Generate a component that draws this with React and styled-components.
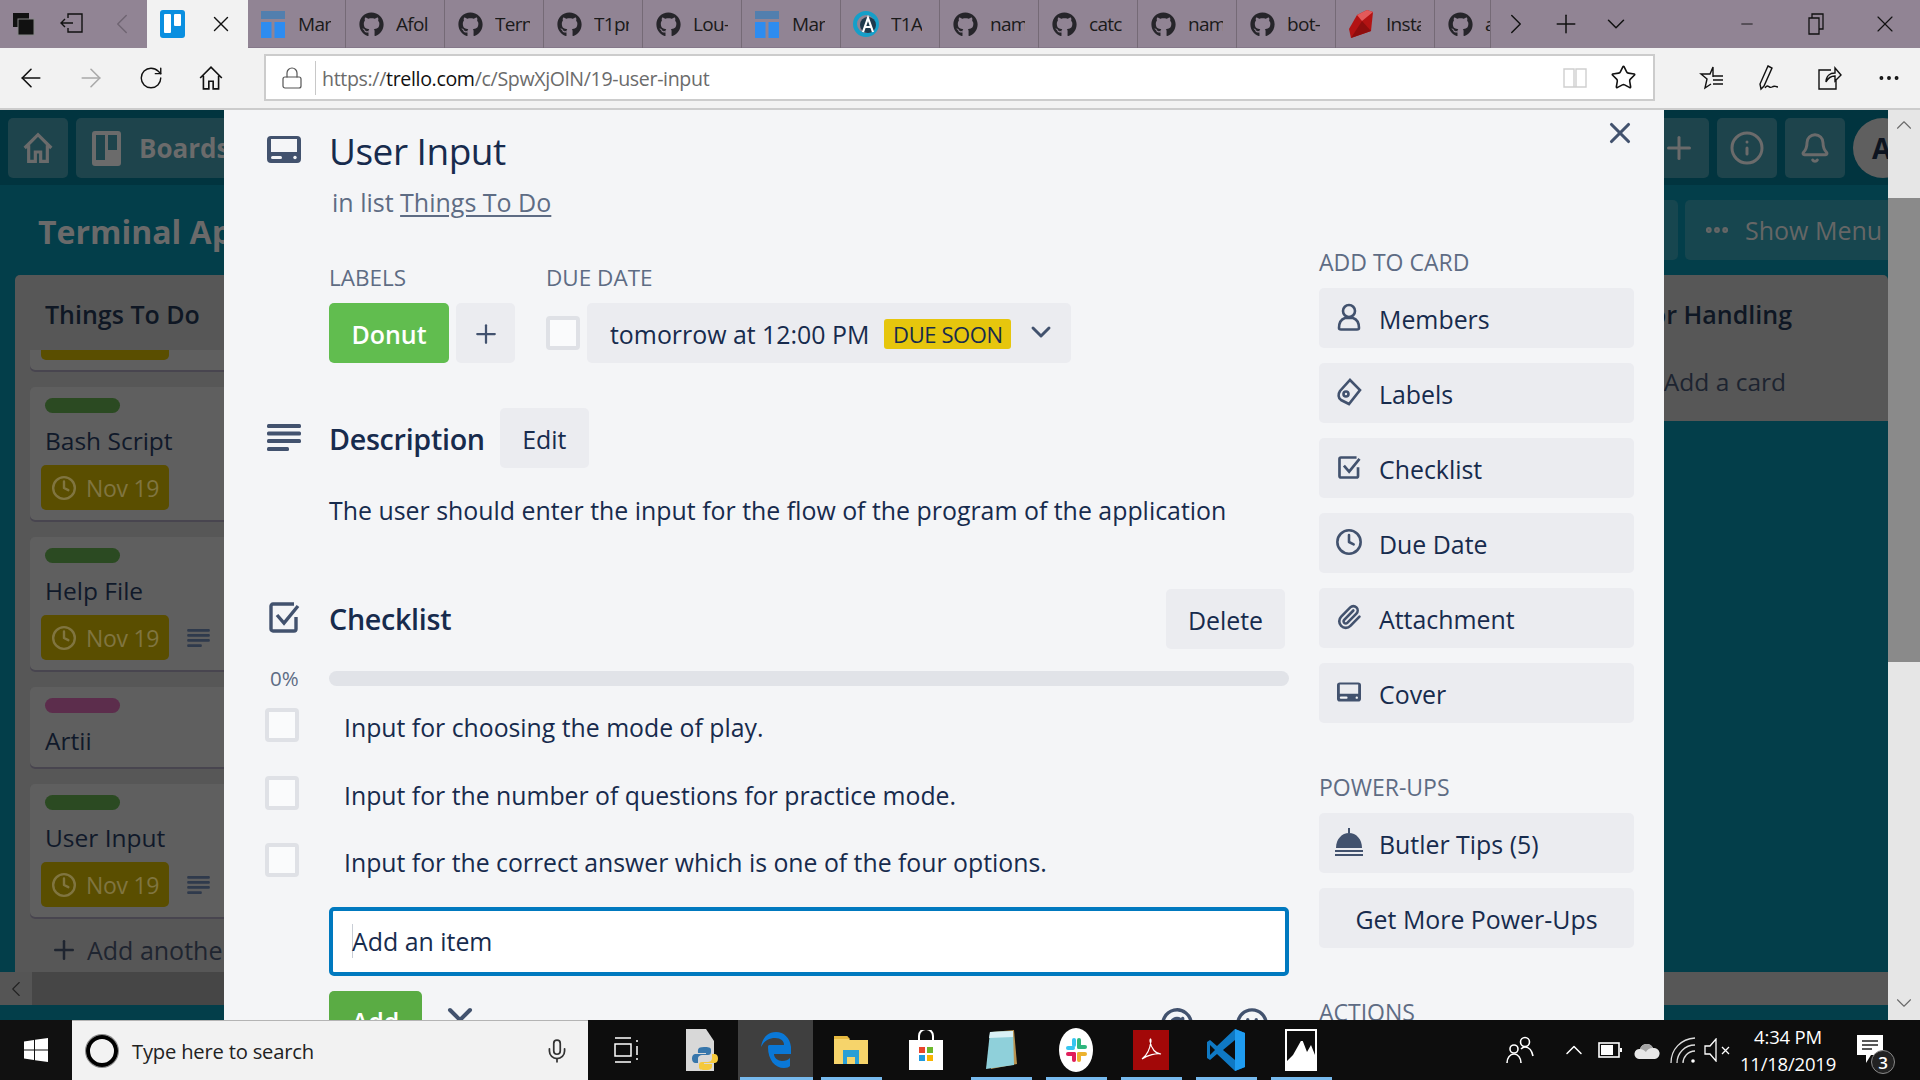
import styled, { createGlobalStyle } from 'styled-components';
import { FaGithub } from 'react-icons/fa';
import { ArrowLeft, ArrowRight, RotateCw, Lock, Star, Plus, X, ChevronDown, ChevronLeft, ChevronRight, ChevronUp, Minus, Info, Bell, Clock, Mic, Paperclip, AtSign, Smile, MoreHorizontal } from 'lucide-react';

const FONT = `"Open Sans", "Noto Sans", "Liberation Sans", sans-serif`;

const GlobalStyle = createGlobalStyle`
  html, body { margin: 0; padding: 0; width: 1920px; height: 1080px; overflow: hidden; }
  body { font-family: ${FONT}; color: #172b4d; }
  * { box-sizing: border-box; }
`;

const Screen = styled.div`
  width: 1920px;
  height: 1080px;
  display: flex;
  flex-direction: column;
  overflow: hidden;
`;

/* browser chrome */
const TabStrip = styled.div`
  height: 48px;
  flex: none;
  display: flex;
  align-items: stretch;
  background: #918494;
`;
const StripTool = styled.div`
  width: ${p => p.$w}px;
  flex: none;
  display: flex;
  align-items: center;
  justify-content: center;
  color: ${p => p.$dim ? '#6f6472' : '#111'};
  margin-left: ${p => p.$push ? 'auto' : '0'};
  height: 48px;
`;
const ActiveTab = styled.div`
  width: 101px;
  flex: none;
  display: flex;
  align-items: center;
  justify-content: space-between;
  padding: 0 14px 0 13px;
  background: #f2f2f2;
`;
const Tab = styled.div`
  width: ${p => p.$w || 99}px;
  flex: none;
  display: flex;
  align-items: center;
  gap: 12px;
  padding-left: 12px;
  border-right: 1px solid #756a76;
  overflow: hidden;
  box-shadow: inset 0 -1px 0 #85788a;
`;
const TabIcon = styled.span`
  width: 26px;
  height: 26px;
  flex: none;
  display: flex;
  align-items: center;
  justify-content: center;
  color: #26252a;
`;
const TabText = styled.span`
  max-width: 35px;
  font-size: 19px;
  letter-spacing: -0.7px;
  color: #1a1a1a;
  white-space: nowrap;
  overflow: hidden;
`;
const WindowTools = styled.div`
  flex: 1;
  display: flex;
  align-items: center;
`;

const Toolbar = styled.div`
  height: 62px;
  flex: none;
  display: flex;
  padding-top: 6px;
  background: #f2f2f2;
  border-bottom: 2px solid #cccccc;
`;
const NavTools = styled.div`
  width: 264px;
  flex: none;
  height: 47px;
  display: flex;
  align-items: center;
  padding-left: 1px;
`;
const NavButton = styled.div`
  width: 60px;
  height: 47px;
  display: flex;
  align-items: center;
  justify-content: center;
  color: ${p => p.$dim ? '#a9a9a9' : '#111'};
`;
const AddressBar = styled.div`
  width: 1391px;
  height: 47px;
  flex: none;
  display: flex;
  align-items: center;
  background: #fff;
  border: 2px solid #cccccc;
  padding: 0 6px 0 14px;
`;
const LockCell = styled.div`
  width: 36px;
  height: 34px;
  flex: none;
  display: flex;
  align-items: center;
  border-right: 1px solid #c8c8c8;
  color: #555;
  margin-right: 6px;
`;
const Url = styled.div`
  flex: 1;
  padding-top: 2px;
  font-size: 19.6px;
  letter-spacing: -0.35px;
  color: #6b6b6b;
  b { font-weight: 400; color: #111; }
`;
const BarIcon = styled.div`
  width: 48px;
  display: flex;
  justify-content: center;
  color: ${p => p.$dim ? '#cfcfcf' : '#111'};
`;
const EndTools = styled.div`
  flex: 1;
  height: 47px;
  display: flex;
  align-items: center;
  padding-left: 27px;
`;
const EndTool = styled.div`
  width: 59px;
  display: flex;
  justify-content: center;
  color: #111;
`;

/* board behind the dialog */
const Page = styled.div`
  flex: 1;
  min-height: 0;
  display: flex;
  position: relative;
  overflow: hidden;
`;
const Board = styled.div`
  width: 1888px;
  display: flex;
  flex-direction: column;
  background: #033e4a;
  position: relative;
`;
const BoardHeader = styled.div`
  height: 75px;
  flex: none;
  display: flex;
  gap: 8px;
  padding: 8px 0 7px 8px;
  background: #01343f;
  overflow: hidden;
`;
const HeaderButton = styled.div`
  width: ${p => p.$w || 60}px;
  flex: none;
  height: 60px;
  display: flex;
  align-items: center;
  justify-content: center;
  background: #1e444c;
  border-radius: 5px;
  color: #6b6b6b;
  margin-left: ${p => p.$push ? 'auto' : '0'};
`;
const BoardsButton = styled(HeaderButton)`
  justify-content: flex-start;
  gap: 18px;
  padding-left: 16px;
  font-size: 26px;
  font-weight: 700;
`;
const Avatar = styled.div`
  width: 60px;
  height: 60px;
  flex: none;
  border-radius: 50%;
  margin-right: -25px;
  background: #5f5f5f;
  color: #0d1420;
  font-size: 28px;
  font-weight: 700;
  padding-left: 19px;
  line-height: 60px;
`;
const BoardBar = styled.div`
  height: 90px;
  flex: none;
  display: flex;
  align-items: flex-start;
  gap: 7px;
  padding: 15px 0 0 38px;
`;
const BoardTitle = styled.div`
  font-size: 32px;
  line-height: 64px;
  font-weight: 700;
  color: #6a6a6a;
  white-space: nowrap;
`;
const FilterButton = styled.div`
  margin-left: auto;
  width: 60px;
  height: 60px;
  background: #17464f;
  border-radius: 5px;
`;
const MenuButton = styled.div`
  width: 203px;
  height: 60px;
  display: flex;
  align-items: center;
  gap: 14px;
  padding-left: 18px;
  background: #17464f;
  border-radius: 5px 0 0 5px;
  color: #666;
  font-size: 25px;
  white-space: nowrap;
`;
const Lists = styled.div`
  flex: 1;
  min-height: 0;
  display: flex;
  justify-content: space-between;
  align-items: flex-start;
  padding-left: 15px;
  overflow: hidden;
`;
const List = styled.div`
  width: ${p => p.$w}px;
  height: ${p => p.$h ? `${p.$h}px` : '100%'};
  flex: none;
  background: #575757;
  border-radius: 5px 5px 0 0;
  padding: 0 0 0 15px;
  overflow: hidden;
`;
const ListTitle = styled.div`
  height: 75px;
  padding: 19px ${p => p.$right ? '96px' : '0'} 0 ${p => p.$right ? '0' : '15px'};
  font-size: 25px;
  line-height: 40px;
  font-weight: 600;
  color: #0f1724;
  white-space: nowrap;
  text-align: ${p => p.$right ? 'right' : 'left'};
`;
const CardStack = styled.div`
  display: flex;
  flex-direction: column;
  gap: 15px;
`;
const TinyCard = styled.div`
  height: ${p => p.$h}px;
  padding: ${p => p.$clip ? '0' : '11px'} 0 0 11px;
  background: #5f5f5f;
  border-radius: ${p => p.$clip ? '0 0 5px 5px' : '5px'};
  box-shadow: inset 0 -2px 0 #48454f;
`;
const CardLabel = styled.div`
  width: 75px;
  height: 15px;
  margin-left: 4px;
  border-radius: 8px;
  background: ${p => p.$c};
`;
const CardText = styled.div`
  margin: 10px 0 0 4px;
  font-size: 24.5px;
  line-height: 36px;
  color: #10192a;
`;
const CardFoot = styled.div`
  display: flex;
  align-items: center;
  margin-top: 6px;
  gap: 18px;
`;
const DueBadge = styled.div`
  width: 128px;
  height: 45px;
  display: flex;
  align-items: center;
  gap: 9px;
  padding-left: 10px;
  background: #5a4e00;
  border-radius: 5px;
  color: #807540;
  font-size: 23px;
  letter-spacing: -0.3px;
  flex: none;
  white-space: nowrap;
`;
const ClipBadge = styled.div`
  width: 128px;
  height: 10px;
  background: #5a4e00;
  border-radius: 0 0 5px 5px;
`;
const AddAnother = styled.div`
  display: flex;
  align-items: center;
  gap: 8px;
  margin: 13px 0 0 19px;
  font-size: 25px;
  color: #1f2530;
  white-space: nowrap;
  height: 36px;
`;
const AddCardText = styled.div`
  font-size: 24.5px;
  line-height: 36px;
  color: #1d2430;
  text-align: right;
  padding-right: 102px;
  margin-top: 14px;
  white-space: nowrap;
`;
const HScroll = styled.div`
  height: 33px;
  flex: none;
  margin-bottom: 15px;
  background: linear-gradient(90deg, #464646 0 50%, #575757 50%);
  display: flex;
`;
const HScrollArrow = styled.div`
  width: 32px;
  background: #555;
  display: flex;
  align-items: center;
  justify-content: center;
  color: #222;
`;
const VScroll = styled.div`
  width: 32px;
  flex: none;
  display: flex;
  flex-direction: column;
  background: #e6e6e6;
`;
const VArrow = styled.div`
  height: ${p => p.$h}px;
  flex: ${p => p.$grow ? 1 : 'none'};
  display: flex;
  justify-content: center;
  align-items: ${p => p.$grow ? 'flex-end' : 'flex-start'};
  padding: ${p => p.$grow ? '0 0 4px' : '2px 0 0'};
  color: #6a6a6a;
`;
const VThumb = styled.div`
  height: 464px;
  flex: none;
  background: #8a8a8a;
`;

/* trello card dialog */
const Dialog = styled.div`
  position: absolute;
  top: 0;
  bottom: 0;
  left: 224px;
  width: 1440px;
  display: flex;
  gap: 30px;
  background: #f4f5f7;
  overflow: hidden;
`;
const Main = styled.div`
  width: 1065px;
  flex: none;
  padding: 17px 0 0 105px;
  position: relative;
`;
const Gutter = styled.div`
  position: absolute;
  left: ${p => p.$x}px;
  top: ${p => p.$y}px;
  color: #42526e;
  display: flex;
`;
const Section = styled.div`
  position: relative;
  margin-top: ${p => p.$mt || 0}px;
`;
const CardTitle = styled.h2`
  margin: 0;
  font-size: 37px;
  line-height: 48px;
  font-weight: 500;
  letter-spacing: -0.5px;
  color: #172b4d;
`;
const InList = styled.div`
  margin: 9px 0 0 3px;
  font-size: 25px;
  line-height: 36px;
  color: #5e6c84;
  u { text-underline-offset: 3px; text-decoration-thickness: 2px; }
`;
const MetaRow = styled.div`
  display: flex;
  margin-top: 43px;
  gap: 31px;
`;
const MetaBlock = styled.div`
  display: flex;
  flex-direction: column;
`;
const Caption = styled.div`
  font-size: 22.5px;
  line-height: 30px;
  color: #5e6c84;
  white-space: nowrap;
`;
const MetaItems = styled.div`
  display: flex;
  align-items: center;
  margin-top: 10px;
  gap: 7px;
`;
const GreenLabel = styled.div`
  width: 120px;
  height: 60px;
  display: flex;
  align-items: center;
  justify-content: center;
  padding-top: 1px;
  background: #61bd4f;
  border-radius: 5px;
  color: #fff;
  font-size: 25px;
  font-weight: 600;
`;
const Btn = styled.div`
  width: ${p => p.$w ? `${p.$w}px` : 'auto'};
  height: 60px;
  display: flex;
  align-items: center;
  justify-content: center;
  flex: none;
  background: #ebecf0;
  border-radius: 5px;
  color: #172b4d;
  font-size: 24.9px;
  padding-top: 2px;
  margin-left: ${p => p.$push ? 'auto' : '0'};
  margin-right: ${p => p.$push ? '4px' : '0'};
`;
const DateBtn = styled(Btn)`
  width: 484px;
  justify-content: flex-start;
  padding-left: 23px;
  white-space: nowrap;
`;
const SoonBadge = styled.span`
  width: 127px;
  height: 30px;
  margin-left: 15px;
  display: flex;
  align-items: center;
  justify-content: center;
  background: #e6c60d;
  border-radius: 3px;
  font-size: 22px;
  letter-spacing: -0.4px;
`;
const DateChevron = styled.span`
  margin: -4px 0 0 14px;
  display: flex;
  color: #42526e;
`;
const Check = styled.div`
  width: 34px;
  height: 34px;
  flex: none;
  background: #fafbfc;
  border: 4px solid #dfe1e6;
  border-radius: 4px;
`;
const HeadRow = styled.div`
  height: 60px;
  display: flex;
  align-items: center;
  gap: 15px;
`;
const H3 = styled.h3`
  margin: ${p => p.$up ? '-2px' : '0'} 0 0;
  font-size: 28.7px;
  font-weight: 600;
  letter-spacing: -0.3px;
  color: #172b4d;
`;
const Para = styled.p`
  margin: 24px 0 0;
  font-size: 24.9px;
  line-height: 36px;
  color: #172b4d;
  white-space: nowrap;
`;
const ProgressRow = styled.div`
  height: 30px;
  margin-top: 14px;
  display: flex;
  align-items: center;
  position: relative;
`;
const Percent = styled.span`
  position: absolute;
  left: -59px;
  font-size: 20.5px;
  color: #5e6c84;
`;
const Progress = styled.div`
  width: 960px;
  height: 15px;
  border-radius: 8px;
  background: #e1e3e8;
`;
const Items = styled.div`
  margin-top: 7px;
  position: relative;
`;
const Item = styled.div`
  height: 67.5px;
  padding: 9px 0 0 15px;
  font-size: 24.8px;
  line-height: 36px;
  color: #172b4d;
  white-space: nowrap;
  position: relative;
`;
const ItemCheck = styled(Check)`
  position: absolute;
  left: -64px;
  top: 8px;
`;
const ItemInput = styled.div`
  margin-top: 4.5px;
  height: 69px;
  display: flex;
  align-items: center;
  padding: 0 0 2px 19px;
  background: #fff;
  border: 4px solid #0079bf;
  border-radius: 5px;
  font-size: 24.9px;
  color: #172b4d;
`;
const Caret = styled.span`
  width: 1px;
  height: 34px;
  background: #c9ced6;
  margin-right: -1px;
`;
const AddRow = styled.div`
  margin-top: 15px;
  display: flex;
  align-items: flex-start;
  color: #42526e;
`;
const AddBtn = styled.div`
  width: 93px;
  height: 60px;
  display: flex;
  align-items: center;
  justify-content: center;
  background: #5aac44;
  border-radius: 5px;
  color: #fff;
  font-size: 25px;
  font-weight: 600;
`;
const AddClose = styled.div`
  margin: 9px 0 0 18px;
  display: flex;
`;
const AddTools = styled.div`
  margin: 16px 0 0 auto;
  padding-right: 20px;
  display: flex;
  gap: 41px;
`;
const Sidebar = styled.div`
  width: 345px;
  flex: none;
  padding: 137px 30px 0 0;
  position: relative;
`;
const SideGroup = styled.div`
  display: flex;
  flex-direction: column;
  gap: 15px;
  margin-top: 11px;
`;
const SideCaption = styled(Caption)`
  font-size: 23px;
  margin-top: ${p => p.$mt || 0}px;
`;
const SideBtn = styled.div`
  height: 60px;
  display: flex;
  align-items: center;
  justify-content: ${p => p.$center ? 'center' : 'flex-start'};
  background: #ebecf0;
  border-radius: 5px;
  font-size: 24.9px;
  color: #172b4d;
  padding-top: 2px;
`;
const SideIcon = styled.span`
  width: 60px;
  margin-top: -4px;
  flex: none;
  display: flex;
  justify-content: center;
  color: #42526e;
`;
const CloseBtn = styled.div`
  position: absolute;
  top: 6px;
  right: 27px;
  color: #42526e;
  display: flex;
`;

/* windows taskbar */
const Taskbar = styled.div`
  height: 60px;
  flex: none;
  display: flex;
  background: #0d0d0d;
  color: #fff;
`;
const StartCell = styled.div`
  width: 72px;
  flex: none;
  display: flex;
  align-items: center;
  justify-content: center;
  background: #111;
`;
const SearchBox = styled.div`
  width: 516px;
  flex: none;
  display: flex;
  align-items: center;
  padding: 0 18px 0 14px;
  background: #f2f2f2;
  border-top: 1px solid #b4b4b4;
  color: #222;
  font-size: 20.2px;
  letter-spacing: -0.2px;
`;
const Cortana = styled.span`
  width: 32px;
  height: 32px;
  flex: none;
  border: 4px solid #000;
  border-radius: 50%;
  margin-right: 14px;
  box-shadow: 0 0 0 1px #888;
`;
const MicCell = styled.span`
  margin-left: auto;
  color: #333;
  display: flex;
`;
const Slot = styled.div`
  width: 75px;
  flex: none;
  display: flex;
  align-items: center;
  justify-content: center;
  position: relative;
  background: ${p => p.$active ? '#3f3f3f' : 'transparent'};
  &::after {
    content: '';
    display: ${p => p.$open ? 'block' : 'none'};
    position: absolute;
    bottom: 0;
    left: ${p => p.$active ? '2px' : '8px'};
    right: ${p => p.$active ? '0' : '6px'};
    height: 3px;
    background: #76b9ed;
  }
`;
const Tray = styled.div`
  flex: 1;
  display: flex;
  justify-content: flex-end;
  padding-right: 21px;
`;
const TrayCell = styled.div`
  width: ${p => p.$w}px;
  margin-right: ${p => p.$mr || 0}px;
  flex: none;
  display: flex;
  align-items: center;
  justify-content: center;
  position: relative;
`;
const Clock2 = styled.div`
  text-align: center;
  font-size: 18.5px;
  line-height: 27px;
  letter-spacing: -0.2px;
  white-space: nowrap;
`;
const NotifyCount = styled.span`
  position: absolute;
  right: 4px;
  top: 30px;
  width: 24px;
  height: 24px;
  border-radius: 50%;
  background: #222;
  border: 1px solid #888;
  color: #fff;
  font-size: 17px;
  font-weight: 600;
  display: flex;
  align-items: center;
  justify-content: center;
`;

/* drawn icons */
const TrelloMark = () => (
  <svg width="25" height="28" viewBox="0 0 25 28">
    <rect width="25" height="28" rx="3" fill="#0a8fe0" />
    <rect x="4" y="4" width="7" height="19" rx="1" fill="#fff" />
    <rect x="14" y="4" width="7" height="12" rx="1" fill="#fff" />
  </svg>
);
const BoardMark = () => (
  <svg width="24" height="27" viewBox="0 0 24 27">
    <rect width="24" height="8" fill="#527fae" />
    <rect y="11" width="10.5" height="16" fill="#2d8cf0" />
    <rect x="13.5" y="11" width="10.5" height="16" fill="#2d8cf0" />
  </svg>
);
const CircleA = () => (
  <svg width="26" height="26" viewBox="0 0 26 26">
    <circle cx="13" cy="13" r="11" fill="none" stroke="#159fc9" strokeWidth="4" />
    <circle cx="15" cy="14" r="8" fill="#1f3a4d" />
    <path d="M10 21 15 7l5 14M12 16h6" fill="none" stroke="#fff" strokeWidth="2.200" />
  </svg>
);
const RubyMark = () => (
  <svg width="26" height="30" viewBox="0 0 26 30">
    <path d="M19 1 25 3 23 22 3 29 1 20 9 6Z" fill="#b31313" />
    <path d="M19 1 25 3 14 12 9 6Z" fill="#e25a5a" />
    <path d="M3 29 14 12 23 22Z" fill="#8e0d0d" />
  </svg>
);
const SetAside = () => (
  <svg width="22" height="26" viewBox="0 0 22 26">
    <rect x="0" y="2" width="16" height="14" fill="#111" />
    <rect x="5" y="8" width="16" height="16" fill="#111" stroke="#888" />
  </svg>
);
const TabsAside = () => (
  <svg width="24" height="24" viewBox="0 0 24 24" fill="none" stroke="#111" strokeWidth="1.4">
    <path d="M8 6V2h14v18H8v-4M1 11h12M5 7l-4 4 4 4" />
  </svg>
);
const HomeIcon = ({ size = 24, width = 1.5 }) => (
  <svg width={size} height={size} viewBox="0 0 24 24" fill="none" stroke="currentColor" strokeWidth={width}>
    <path d="M2 12 12 2l10 10M5 10v12h5v-7h4v7h5V10" />
  </svg>
);
const ReadIcon = () => (
  <svg width="24" height="24" viewBox="0 0 24 24" fill="none" stroke="currentColor" strokeWidth="1.4">
    <path d="M1 3h10v18H1zM13 3h10v18H13zM11 21h2" />
  </svg>
);
const FavIcon = () => (
  <svg width="26" height="26" viewBox="0 0 26 26" fill="none" stroke="currentColor" strokeWidth="1.4">
    <path d="M14 12V2l-3 7H2l6 5-2 9 6-4M14 11h10M14 15h10M14 19h10" />
  </svg>
);
const PenIcon = () => (
  <svg width="28" height="28" viewBox="0 0 28 28" fill="none" stroke="currentColor" strokeWidth="1.4">
    <path d="M11 2 15 4 7 22l-3 3-1-5ZM8 24c3-5 4 1 7-1s3 0 6 0" />
  </svg>
);
const ShareIcon = () => (
  <svg width="26" height="26" viewBox="0 0 26 26" fill="none" stroke="currentColor" strokeWidth="1.4">
    <path d="M14 5H2v19h17v-9M9 17c0-6 4-9 9-9V3l6 7-6 6v-5c-4 0-7 2-9 6Z" />
  </svg>
);
const RestoreIcon = () => (
  <svg width="16" height="22" viewBox="0 0 16 22" fill="none" stroke="#111" strokeWidth="1.300">
    <path d="M1 5h10v16H1zM4 5V1h11v15h-4" />
  </svg>
);
const BoardsIcon = () => (
  <svg width="29" height="35" viewBox="0 0 29 35">
    <rect width="29" height="35" rx="3" fill="#6b6b6b" />
    <rect x="4" y="4" width="9" height="25" fill="#1e444c" />
    <rect x="16" y="4" width="9" height="15" fill="#1e444c" />
  </svg>
);
const DescLines = ({ w = 34, h = 27, color = 'currentColor' }) => (
  <svg width={w} height={h} viewBox="0 0 34 27" fill={color}>
    <rect width="34" height="4" rx="1.5" />
    <rect y="7.5" width="34" height="4" rx="1.5" />
    <rect y="15" width="34" height="4" rx="1.5" />
    <rect y="23" width="22" height="4" rx="1.5" />
  </svg>
);
const CardIcon = ({ w = 34, h = 27 }) => (
  <svg width={w} height={h} viewBox="0 0 34 27">
    <path fillRule="evenodd" fill="currentColor" d="M4 0h26a4 4 0 0 1 4 4v19a4 4 0 0 1-4 4H4a4 4 0 0 1-4-4V4a4 4 0 0 1 4-4Zm0 3v13h26V3Z" />
    <rect x="4" y="20" width="11" height="3" rx="1.5" fill="#f4f5f7" />
    <circle cx="28" cy="21.5" r="1.7" fill="#f4f5f7" />
  </svg>
);
const CheckIcon = ({ size = 31, width = 3.4 }) => (
  <svg width={size} height={size} viewBox="0 0 31 31" fill="none" stroke="currentColor" strokeWidth={width}>
    <path d="M27 15v12a2 2 0 0 1-2 2H4a2 2 0 0 1-2-2V4a2 2 0 0 1 2-2h21" />
    <path d="M8 13l7 8L29 4" />
  </svg>
);
const PersonIcon = () => (
  <svg width="24" height="28" viewBox="0 0 24 28" fill="none" stroke="currentColor" strokeWidth="2.6">
    <circle cx="12" cy="8" r="6" />
    <path d="M2 25c0-6 3-9 6-10h8c3 1 6 4 6 10 0 1-1 1.500-2 1.500H4c-1 0-2-.5-2-1.500Z" />
  </svg>
);
const TagIcon = () => (
  <svg width="25" height="28" viewBox="0 0 25 28" fill="none" stroke="currentColor" strokeWidth="2.6">
    <path d="M13 2 23 12 12 26 4 22C1 20 1 16 3 13Z" />
    <circle cx="9" cy="16" r="2.500" />
  </svg>
);
const BellTop = () => (
  <svg width="28" height="28" viewBox="0 0 28 28" fill="currentColor">
    <rect x="13" y="0" width="2" height="5" />
    <path d="M1 20C1 11 7 5 14 5s13 6 13 15Z" />
    <rect y="22" width="28" height="2" />
    <rect y="26" width="28" height="2" />
  </svg>
);
const WinLogo = () => (
  <svg width="24" height="24" viewBox="0 0 24 24" fill="#fff">
    <path d="M0 3.500 10 2v9.500H0ZM11 1.800 24 0v11.500H11ZM0 12.500h10V22L0 20.500ZM11 12.500h13V24l-13-1.800Z" />
  </svg>
);
const TaskView = () => (
  <svg width="26" height="26" viewBox="0 0 26 26" fill="none" stroke="#fff" strokeWidth="1.5">
    <path d="M2 1h16M2 25h16M2 7h16v12H2zM24 3v2M24 9v9M24 21v2" />
  </svg>
);
const PyFile = () => (
  <svg width="34" height="42" viewBox="0 0 34 42">
    <path d="M2 0h20l8 12v30H2Z" fill="#d8d8d8" />
    <path d="M20 18c-7 0-6 3-6 6h8v1H11c-4 0-4 9 0 9h3v-4c0-3 2-4 5-4h5c2 0 3-1 3-3v-2c0-3-3-3-7-3Z" fill="#3776ab" />
    <path d="M22 41c7 0 6-3 6-6h-8v-1h11c4 0 4-9 0-9h-3v4c0 3-2 4-5 4h-5c-2 0-3 1-3 3v2c0 3 3 3 7 3Z" fill="#f5c93c" />
  </svg>
);
const EdgeLogo = () => (
  <svg width="30" height="36" viewBox="0 0 30 36">
    <path d="M15 0C6 0 1 7 0 15c3-6 8-9 14-9 6 0 9 3 9 7H10c-2 0-3 0-3 2 0 13 7 21 16 21 3 0 5-1 6-2v-8c-2 2-4 3-8 3-4 0-8-3-8-7h17c0-2 .5-3 0-7C29 6 23 0 15 0Z" fill="#0a78d7" />
  </svg>
);
const FolderLogo = () => (
  <svg width="34" height="32" viewBox="0 0 34 32">
    <path d="M0 2h13l3 4h18v24H0Z" fill="#f6d46b" />
    <path d="M0 2h13l3 3H0Z" fill="#e6b93f" />
    <path d="M9 16h16v14h-4v-7h-8v7H9Z" fill="#2a9fd6" />
  </svg>
);
const StoreLogo = () => (
  <svg width="34" height="40" viewBox="0 0 34 40">
    <path d="M10 10V6a7 7 0 0 1 14 0v4" fill="none" stroke="#fff" strokeWidth="2" />
    <rect y="10" width="34" height="30" fill="#fff" />
    <rect x="10" y="17" width="6" height="6" fill="#e8452c" />
    <rect x="18" y="17" width="6" height="6" fill="#6cb82c" />
    <rect x="10" y="25" width="6" height="6" fill="#1f9be0" />
    <rect x="18" y="25" width="6" height="6" fill="#f8b400" />
  </svg>
);
const NotepadLogo = () => (
  <svg width="34" height="40" viewBox="0 0 34 40">
    <path d="M8 2 30 0l3 34-26 5Z" fill="#b89250" />
    <path d="M6 2 29 1l1 34-28 4Z" fill="#8fd0da" />
    <path d="M6 2 29 1v6L5 8Z" fill="#d9f1f5" />
  </svg>
);
const SlackLogo = () => (
  <svg width="36" height="44" viewBox="0 0 36 44">
    <ellipse cx="18" cy="22" rx="17" ry="22" fill="#fff" />
    <rect x="8" y="18" width="9" height="4" rx="2" fill="#36c5f0" />
    <rect x="14" y="10" width="4" height="9" rx="2" fill="#36c5f0" />
    <rect x="19" y="10" width="4" height="11" rx="2" fill="#2eb67d" />
    <rect x="19" y="17" width="10" height="4" rx="2" fill="#2eb67d" />
    <rect x="19" y="24" width="10" height="4" rx="2" fill="#ecb22e" />
    <rect x="19" y="24" width="4" height="10" rx="2" fill="#ecb22e" />
    <rect x="8" y="24" width="10" height="4" rx="2" fill="#e01e5a" />
    <rect x="14" y="24" width="4" height="10" rx="2" fill="#e01e5a" />
  </svg>
);
const AcrobatLogo = () => (
  <svg width="36" height="40" viewBox="0 0 36 40">
    <rect width="36" height="40" fill="#a20808" />
    <path d="M9 29c4-3 8-10 9-18 0-3-1-3-1 0 1 8 6 13 11 13-5-1-13 1-19 5Z" fill="none" stroke="#fff" strokeWidth="1.2" />
  </svg>
);
const VsLogo = () => (
  <svg width="38" height="42" viewBox="0 0 38 42">
    <path d="M28 0 38 4v34l-10 4L10 25 3 31 0 29v-16l3-2 7 6Z" fill="#0f79c4" />
    <path d="M28 0 38 4v34l-10 4Z" fill="#1f9cf0" />
    <path d="M28 11v20l-12-10Z" fill="#0d0d0d" />
    <path d="M3 16v10l5-5Z" fill="#0d0d0d" />
  </svg>
);
const PhotosLogo = () => (
  <svg width="32" height="42" viewBox="0 0 32 42">
    <rect width="32" height="42" fill="#fff" />
    <rect x="2" y="2" width="28" height="10" fill="#0d0d0d" />
    <path d="M2 12h28v14l-4-10-4 7-5-13-9 16-6 6Z" fill="#0d0d0d" />
  </svg>
);
const PeopleIcon = () => (
  <svg width="30" height="30" viewBox="0 0 30 30" fill="none" stroke="#fff" strokeWidth="1.600">
    <circle cx="20" cy="7" r="4.500" />
    <circle cx="9" cy="14" r="4" />
    <path d="M2 28c0-5 3-9 7-9s7 4 7 9M16 14c1-1 3-2 4-2 4 0 7 4 8 9" />
  </svg>
);
const BatteryIcon = () => (
  <svg width="24" height="16" viewBox="0 0 24 16">
    <rect x="1" y="1" width="20" height="14" fill="none" stroke="#fff" strokeWidth="1.600" />
    <rect x="3" y="3" width="12" height="10" fill="#fff" />
    <rect x="22" y="6" width="2" height="4" fill="#fff" />
  </svg>
);
const CloudIcon = () => (
  <svg width="26" height="18" viewBox="0 0 26 18">
    <path d="M6 8a7 7 0 0 1 13-1 5 5 0 0 1 2 11H5a5 5 0 0 1 1-10Z" fill="#e8e8e8" />
    <path d="M6 8a7 7 0 0 1 13-1c-4 0-6 2-7 4-2-2-4-3-6-3Z" fill="#a5a5a5" />
  </svg>
);
const WifiIcon = () => (
  <svg width="28" height="28" viewBox="0 0 28 28" fill="none" stroke="#ddd" strokeWidth="1.3">
    <path d="M2 27C2 13 12 3 26 2M8 27c0-10 8-18 18-18M14 27c0-6 5-12 12-12" />
    <circle cx="24" cy="25" r="1.800" fill="#fff" stroke="none" />
  </svg>
);
const SpeakerIcon = () => (
  <svg width="28" height="24" viewBox="0 0 28 24" fill="none" stroke="#fff" strokeWidth="1.3">
    <path d="M1 8h5l6-7v22l-6-7H1ZM18 9l7 7M25 9l-7 7" />
  </svg>
);
const NoteIcon = () => (
  <svg width="26" height="30" viewBox="0 0 26 30" fill="#fff">
    <path d="M0 0h26v20H14l-5 8v-8H0Z" />
    <path d="M5 6h16M5 10h16M5 14h10" stroke="#222" strokeWidth="1.400" />
  </svg>
);

const tabs = [
  { icon: <BoardMark />, text: 'Mar' },
  { icon: <FaGithub size={25} />, text: 'Afol' },
  { icon: <FaGithub size={25} />, text: 'Tern' },
  { icon: <FaGithub size={25} />, text: 'T1pr' },
  { icon: <FaGithub size={25} />, text: 'Lou-' },
  { icon: <BoardMark />, text: 'Mar' },
  { icon: <CircleA />, text: 'T1A' },
  { icon: <FaGithub size={25} />, text: 'nam' },
  { icon: <FaGithub size={25} />, text: 'catc' },
  { icon: <FaGithub size={25} />, text: 'nam' },
  { icon: <FaGithub size={25} />, text: 'bot-' },
  { icon: <RubyMark />, text: 'Insta' },
];

const actions = [
  { icon: <PersonIcon />, text: 'Members' },
  { icon: <TagIcon />, text: 'Labels' },
  { icon: <CheckIcon size={23} width={3.6} />, text: 'Checklist' },
  { icon: <Clock size={28} strokeWidth={2.2} />, text: 'Due Date' },
  { icon: <Paperclip size={26} strokeWidth={2.4} />, text: 'Attachment' },
  { icon: <CardIcon w={24} h={20} />, text: 'Cover' },
];

const checklist = [
  'Input for choosing the mode of play.',
  'Input for the number of questions for practice mode.',
  'Input for the correct answer which is one of the four options.',
];

const dockIcons = [
  { icon: <TaskView /> },
  { icon: <PyFile /> },
  { icon: <EdgeLogo />, open: true, active: true },
  { icon: <FolderLogo />, open: true },
  { icon: <StoreLogo /> },
  { icon: <NotepadLogo />, open: true },
  { icon: <SlackLogo />, open: true },
  { icon: <AcrobatLogo />, open: true },
  { icon: <VsLogo />, open: true },
  { icon: <PhotosLogo />, open: true },
];

function Due({ withDesc }) {
  return (
    <CardFoot>
      <DueBadge><Clock size={26} strokeWidth={2.2} color="#807540" />Nov 19</DueBadge>
      {withDesc && <DescLines w={23} h={18} color="#2f3a4c" />}
    </CardFoot>
  );
}

export default function App() {
  return (
    <Screen>
      <GlobalStyle />
      <TabStrip>
        <StripTool $w={48}><SetAside /></StripTool>
        <StripTool $w={48}><TabsAside /></StripTool>
        <StripTool $w={51} $dim><ChevronLeft size={34} strokeWidth={1} /></StripTool>
        <ActiveTab>
          <TrelloMark />
          <X size={26} strokeWidth={1.3} color="#111" />
        </ActiveTab>
        {tabs.map((t, i) => (
          <Tab key={i} $w={i === 0 ? 98 : 99}>
            <TabIcon>{t.icon}</TabIcon>
            <TabText>{t.text}</TabText>
          </Tab>
        ))}
        <Tab $w={56}><TabIcon><FaGithub size={25} /></TabIcon><TabText>a</TabText></Tab>
        <WindowTools>
          <StripTool $w={50}><ChevronRight size={34} strokeWidth={1} /></StripTool>
          <StripTool $w={50}><Plus size={30} strokeWidth={1.2} /></StripTool>
          <StripTool $w={50}><ChevronDown size={30} strokeWidth={1.2} /></StripTool>
          <StripTool $w={70} $push><Minus size={18} strokeWidth={1.2} /></StripTool>
          <StripTool $w={68}><RestoreIcon /></StripTool>
          <StripTool $w={70}><X size={28} strokeWidth={1} /></StripTool>
        </WindowTools>
      </TabStrip>

      <Toolbar>
        <NavTools>
          <NavButton><ArrowLeft size={30} strokeWidth={1.3} /></NavButton>
          <NavButton $dim><ArrowRight size={30} strokeWidth={1.3} /></NavButton>
          <NavButton><RotateCw size={26} strokeWidth={1.3} /></NavButton>
          <NavButton><HomeIcon size={26} /></NavButton>
        </NavTools>
        <AddressBar>
          <LockCell><Lock size={24} strokeWidth={1.2} /></LockCell>
          <Url>https://<b>trello.com</b>/c/SpwXjOlN/19-user-input</Url>
          <BarIcon $dim><ReadIcon /></BarIcon>
          <BarIcon><Star size={27} strokeWidth={1.4} /></BarIcon>
        </AddressBar>
        <EndTools>
          <EndTool><FavIcon /></EndTool>
          <EndTool><PenIcon /></EndTool>
          <EndTool><ShareIcon /></EndTool>
          <EndTool><MoreHorizontal size={26} strokeWidth={1.6} /></EndTool>
        </EndTools>
      </Toolbar>

      <Page>
        <Board>
          <BoardHeader>
            <HeaderButton><HomeIcon size={32} width={2.4} /></HeaderButton>
            <BoardsButton $w={220}><BoardsIcon />Boards</BoardsButton>
            <HeaderButton $push><Plus size={36} strokeWidth={2} /></HeaderButton>
            <HeaderButton><Info size={36} strokeWidth={2} /></HeaderButton>
            <HeaderButton><Bell size={32} strokeWidth={2.2} /></HeaderButton>
            <Avatar>A</Avatar>
          </BoardHeader>
          <BoardBar>
            <BoardTitle>Terminal App</BoardTitle>
            <FilterButton />
            <MenuButton><MoreHorizontal size={28} strokeWidth={3} />Show Menu</MenuButton>
          </BoardBar>
          <Lists>
            <List $w={320}>
              <ListTitle>Things To Do</ListTitle>
              <CardStack>
                <TinyCard $clip $h={22}><ClipBadge /></TinyCard>
                <TinyCard $h={135}>
                  <CardLabel $c="#2b4a22" />
                  <CardText>Bash Script</CardText>
                  <Due />
                </TinyCard>
                <TinyCard $h={135}>
                  <CardLabel $c="#2b4a22" />
                  <CardText>Help File</CardText>
                  <Due withDesc />
                </TinyCard>
                <TinyCard $h={82}>
                  <CardLabel $c="#5c2d4c" />
                  <CardText>Artii</CardText>
                </TinyCard>
                <TinyCard $h={135}>
                  <CardLabel $c="#2b4a22" />
                  <CardText>User Input</CardText>
                  <Due withDesc />
                </TinyCard>
              </CardStack>
              <AddAnother><Plus size={30} strokeWidth={2} />Add another card</AddAnother>
            </List>
            <List $w={320} $h={146}>
              <ListTitle $right>Error Handling</ListTitle>
              <AddCardText>Add a card</AddCardText>
            </List>
          </Lists>
          <HScroll>
            <HScrollArrow><ChevronLeft size={26} strokeWidth={1} /></HScrollArrow>
          </HScroll>
          <Dialog>
            <Main>
              <Gutter $x={43} $y={26}><CardIcon /></Gutter>
              <CardTitle>User Input</CardTitle>
              <InList>in list <u>Things To Do</u></InList>
              <MetaRow>
                <MetaBlock>
                  <Caption>LABELS</Caption>
                  <MetaItems>
                    <GreenLabel>Donut</GreenLabel>
                    <Btn $w={59}><Plus size={30} strokeWidth={1.8} color="#42526e" /></Btn>
                  </MetaItems>
                </MetaBlock>
                <MetaBlock>
                  <Caption>DUE DATE</Caption>
                  <MetaItems>
                    <Check />
                    <DateBtn>
                      tomorrow at 12:00 PM
                      <SoonBadge>DUE SOON</SoonBadge>
                      <DateChevron><ChevronDown size={32} strokeWidth={2.2} /></DateChevron>
                    </DateBtn>
                  </MetaItems>
                </MetaBlock>
              </MetaRow>

              <Section $mt={45}>
                <Gutter $x={-62} $y={16}><DescLines /></Gutter>
                <HeadRow>
                  <H3>Description</H3>
                  <Btn $w={89}>Edit</Btn>
                </HeadRow>
              </Section>
              <Para>The user should enter the input for the flow of the program of the application</Para>

              <Section $mt={61}>
                <Gutter $x={-60} $y={13}><CheckIcon /></Gutter>
                <HeadRow>
                  <H3 $up>Checklist</H3>
                  <Btn $w={119} $push>Delete</Btn>
                </HeadRow>
              </Section>
              <ProgressRow>
                <Percent>0%</Percent>
                <Progress />
              </ProgressRow>
              <Items>
                {checklist.map(text => (
                  <Item key={text}><ItemCheck />{text}</Item>
                ))}
              </Items>
              <ItemInput><Caret />Add an item</ItemInput>
              <AddRow>
                <AddBtn>Add</AddBtn>
                <AddClose><X size={40} strokeWidth={2.4} /></AddClose>
                <AddTools>
                  <AtSign size={34} strokeWidth={2.4} />
                  <Smile size={34} strokeWidth={2.4} />
                </AddTools>
              </AddRow>
            </Main>
            <Sidebar>
              <CloseBtn><X size={34} strokeWidth={2.2} /></CloseBtn>
              <SideCaption>ADD TO CARD</SideCaption>
              <SideGroup>
                {actions.map(a => (
                  <SideBtn key={a.text}><SideIcon>{a.icon}</SideIcon>{a.text}</SideBtn>
                ))}
              </SideGroup>
              <SideCaption $mt={49}>POWER-UPS</SideCaption>
              <SideGroup>
                <SideBtn><SideIcon><BellTop /></SideIcon>Butler Tips (5)</SideBtn>
                <SideBtn $center>Get More Power-Ups</SideBtn>
              </SideGroup>
              <SideCaption $mt={49}>ACTIONS</SideCaption>
            </Sidebar>
          </Dialog>
        </Board>
        <VScroll>
          <VArrow $h={88}><ChevronUp size={26} strokeWidth={1} /></VArrow>
          <VThumb />
          <VArrow $grow><ChevronDown size={26} strokeWidth={1} /></VArrow>
        </VScroll>
      </Page>

      <Taskbar>
        <StartCell><WinLogo /></StartCell>
        <SearchBox>
          <Cortana />
          Type here to search
          <MicCell><Mic size={26} strokeWidth={1.6} /></MicCell>
        </SearchBox>
        {dockIcons.map((d, i) => (
          <Slot key={i} $open={d.open} $active={d.active}>{d.icon}</Slot>
        ))}
        <Tray>
          <TrayCell $w={50} $mr={11}><PeopleIcon /></TrayCell>
          <TrayCell $w={36}><ChevronUp size={28} strokeWidth={1.3} /></TrayCell>
          <TrayCell $w={36}><BatteryIcon /></TrayCell>
          <TrayCell $w={37}><CloudIcon /></TrayCell>
          <TrayCell $w={35}><WifiIcon /></TrayCell>
          <TrayCell $w={35}><SpeakerIcon /></TrayCell>
          <TrayCell $w={106}>
            <Clock2>4:34 PM<br />11/18/2019</Clock2>
          </TrayCell>
          <TrayCell $w={58}>
            <NoteIcon />
            <NotifyCount>3</NotifyCount>
          </TrayCell>
        </Tray>
      </Taskbar>
    </Screen>
  );
}
